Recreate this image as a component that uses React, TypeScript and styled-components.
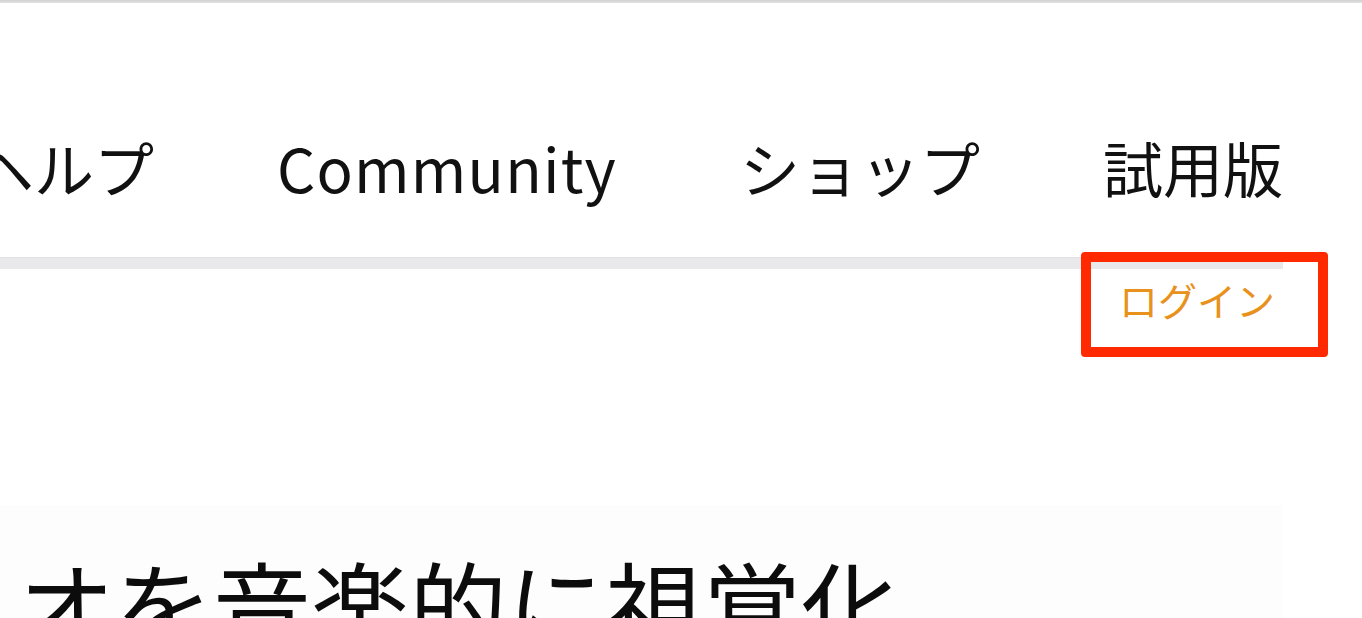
import React from "react"
import styled, { createGlobalStyle } from "styled-components"

const GlobalStyle = createGlobalStyle`
  html, body {
    margin: 0;
    padding: 0;
    background-color: #ffffff;
    overflow: hidden;
  }
  body {
    font-family: "Noto Sans CJK JP", "Noto Sans", sans-serif;
    color: #111111;
  }
`

const navItems = [
  { label: "ヘルプ", latin: false },
  { label: "Community", latin: true },
  { label: "ショップ", latin: false },
  { label: "試用版", latin: false },
]

export default function App(){
  return(
    <>
      <GlobalStyle />
      <Page>
        <TopEdge />
        <Header>
          <Nav>
            {navItems.map(item => (
              <NavLink key={item.label} $latin={item.latin}>{item.label}</NavLink>
            ))}
          </Nav>
          <Divider />
          <AccountRow>
            <LoginLink>ログイン</LoginLink>
          </AccountRow>
        </Header>
        <Hero>
          <HeroTitle>オを音楽的に視覚化</HeroTitle>
        </Hero>
        <Highlight />
      </Page>
    </>
  )
}

const Page = styled.div`
  position: relative;
  width: 1362px;
  height: 618px;
  overflow: hidden;
`

const TopEdge = styled.div`
  height: 3px;
  background: linear-gradient(#d2d2d2, #e2e2e2);
`

const Header = styled.header`
  width: 1283px;
`

const Nav = styled.nav`
  display: flex;
  justify-content: flex-end;
  align-items: center;
  gap: 123px;
  padding: 134px 0 60px 0;
  white-space: nowrap;
`

const NavLink = styled.a<{ $latin: boolean }>`
  font-size: 60px;
  line-height: 60px;
  letter-spacing: ${props => props.$latin ? "1.2px" : "0"};
  color: #111111;
  text-decoration: none;
  cursor: pointer;
`

const Divider = styled.div`
  height: 12px;
  background-color: #e9e9ec;
  border-top: 1px solid #e1e1e4;
  box-sizing: border-box;
`

const AccountRow = styled.div`
  display: flex;
  justify-content: flex-end;
  padding: 10px 8px 0 0;
`

const LoginLink = styled.a`
  font-size: 39px;
  line-height: 40px;
  color: #e8911c;
  text-decoration: none;
  cursor: pointer;
`

const Hero = styled.section`
  width: 1283px;
  margin-top: 186px;
  padding: 48px 0 0 17px;
  box-sizing: border-box;
  height: 200px;
  background-color: #fdfdfd;
`

const HeroTitle = styled.h1`
  margin: 0;
  font-size: 98px;
  line-height: 98px;
  font-weight: 400;
  color: #0c0c0c;
  white-space: nowrap;
`

// callout frame drawn over the login link
const Highlight = styled.div`
  position: absolute;
  left: 1081px;
  top: 252px;
  width: 247px;
  height: 105px;
  box-sizing: border-box;
  border: 10px solid #ff2a00;
  border-radius: 4px;
  pointer-events: none;
`
